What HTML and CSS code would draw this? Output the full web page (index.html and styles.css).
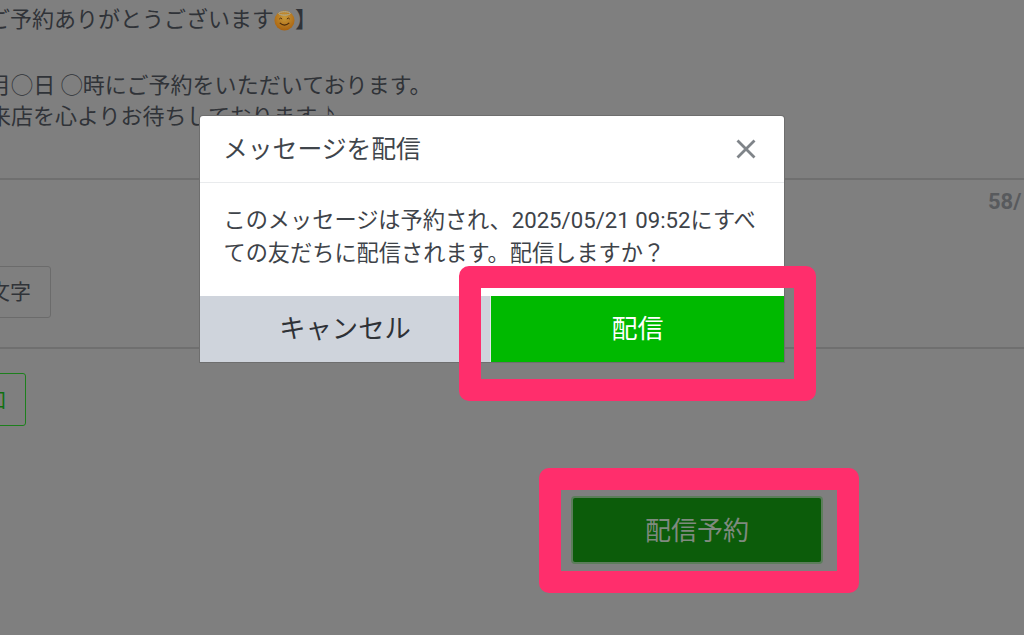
FILE: index.html
```html
<!DOCTYPE html>
<html lang="ja">
<head>
<meta charset="utf-8">
<title>メッセージを配信</title>
<link rel="stylesheet" href="styles.css">
</head>
<body>
<main class="page">
  <section class="message">
    <p class="line first">【ご予約ありがとうございます<svg class="emoji" viewBox="0 0 22 22"><defs><radialGradient id="g" cx="50%" cy="35%" r="65%"><stop offset="0" stop-color="#c99a3a"/><stop offset="1" stop-color="#a9620f"/></radialGradient></defs><circle cx="11" cy="11" r="10.5" fill="url(#g)"/><ellipse cx="11" cy="3.6" rx="6" ry="1.8" fill="none" stroke="#a8b0a8" stroke-width="1"/><path d="M5.5 9.5 Q7 7.3 8.5 9.5 M13.5 9.5 Q15 7.3 16.5 9.5" fill="none" stroke="#4a2a0c" stroke-width="1"/><path d="M6 13.5 Q11 18 16 13.5" fill="none" stroke="#4a2a0c" stroke-width="1.2"/></svg>】</p>
    <p class="line blank">&nbsp;</p>
    <p class="line third">◯月◯日 ◯時にご予約をいただいております。</p>
    <p class="line fourth">ご来店を心よりお待ちしております♪</p>
  </section>
  <section class="editor">
    <div class="counter">58/<span class="limit">500</span></div>
    <button class="tool">絵文字</button>
  </section>
  <section class="adder">
    <button class="add">追加</button>
  </section>
  <section class="actions">
    <button class="schedule">配信予約</button>
  </section>

  <div class="modal">
    <header class="modal-head">
      <h2 class="modal-title">メッセージを配信</h2>
      <svg class="close" viewBox="0 0 20 20"><path d="M1.5 1.5 L18.5 18.5 M18.5 1.5 L1.5 18.5" fill="none" stroke="#7f8489" stroke-width="2.8"/></svg>
    </header>
    <p class="modal-body">このメッセージは予約され、2025/05/21 09:52にすべての友だちに配信されます。配信しますか？</p>
    <footer class="modal-foot">
      <button class="cancel">キャンセル</button>
      <button class="confirm">配信</button>
    </footer>
  </div>

  <div class="mark mark-confirm"></div>
  <div class="mark mark-schedule"></div>
</main>
</body>
</html>
```
FILE: styles.css
```css
* { box-sizing: border-box; }
html, body { margin: 0; padding: 0; }
body { width: 1024px; height: 635px; overflow: hidden; background: #7f7f7f; }
.page {
  position: relative;
  width: 1024px;
  height: 635px;
  overflow: hidden;
  background: #7f7f7f;
  font-family: Roboto, "Noto Sans CJK JP", sans-serif;
  color: #303338;
}
button { font-family: inherit; padding: 0; cursor: pointer; }
.message { height: 180px; padding-top: 4px; border-bottom: 2px solid #6f6f6f; }
.line { margin: 0; font-size: 22px; line-height: 32.7px; white-space: nowrap; }
.first { margin-left: -34px; }
.third { margin: 1px 0 0 -33px; letter-spacing: 0.05px; }
.fourth { margin: -2px 0 0 -33px; }
.emoji { width: 21px; height: 21px; vertical-align: -4px; }
.editor {
  height: 169px;
  border-bottom: 2px solid #6f6f6f;
  display: flex;
  flex-direction: column;
  align-items: flex-start;
}
.counter {
  margin: 9px 0 0 988px;
  font-size: 22px;
  line-height: 26px;
  font-weight: 700;
  color: #585a5d;
  white-space: nowrap;
}
.limit { margin-left: 6px; }
.tool {
  margin: 51px 0 0 -49px;
  width: 100px;
  height: 52px;
  padding: 0 19px 4px 0;
  text-align: right;
  border: 1.5px solid #6b6b6b;
  border-radius: 3px;
  background: transparent;
  color: #303338;
  font-size: 21px;
}
.adder { padding-top: 24px; height: 78px; }
.add {
  display: block;
  margin-left: -38px;
  width: 64px;
  height: 53px;
  padding: 0 19px 4px 0;
  text-align: right;
  border: 1.5px solid #1d7f1d;
  border-radius: 3px;
  background: transparent;
  color: #0f7010;
  font-size: 21px;
}
.actions { padding: 69px 0 0 571px; }
.schedule {
  display: block;
  width: 252px;
  height: 68px;
  padding-bottom: 3px;
  border: 2px solid #5c7d5b;
  border-radius: 4px;
  background: #0c5c0a;
  color: #7f8a7f;
  font-size: 26px;
}
.modal {
  position: absolute;
  left: 200px;
  top: 116px;
  width: 584px;
  height: 246px;
  display: flex;
  flex-direction: column;
  background: #fff;
  border-radius: 3px 3px 0 0;
  box-shadow: 0 0 0 1px #6e6e6e;
  overflow: hidden;
}
.modal-head {
  height: 67px;
  flex: none;
  padding: 0 28px 5px 23px;
  display: flex;
  align-items: center;
  justify-content: space-between;
  border-bottom: 1px solid #e9ebed;
}
.modal-title { margin: 0; font-size: 24.8px; font-weight: 400; color: #40454b; }
.close { width: 20px; height: 20px; margin-top: 5px; }
.modal-body {
  flex: 1;
  margin: 0;
  padding: 21px 25px 0 23.5px;
  font-size: 22.2px;
  line-height: 33px;
  color: #3e4349;
}
.modal-foot { height: 66px; flex: none; display: flex; }
.cancel {
  flex: none;
  width: 291px;
  padding-bottom: 6px;
  border: 0;
  background: #cfd4dc;
  color: #2e3136;
  font-size: 26.3px;
  border-right: 1px solid #e6e8ec;
}
.confirm {
  flex: 1;
  padding-bottom: 6px;
  border: 0;
  background: #00b900;
  color: #fff;
  font-size: 26px;
}
.mark {
  position: absolute;
  border: 22px solid #ff2e6c;
  border-radius: 10px;
  background: transparent;
}
.mark-confirm { left: 459px; top: 266px; width: 357px; height: 135px; }
.mark-schedule { left: 539px; top: 468px; width: 320px; height: 125px; }
```
